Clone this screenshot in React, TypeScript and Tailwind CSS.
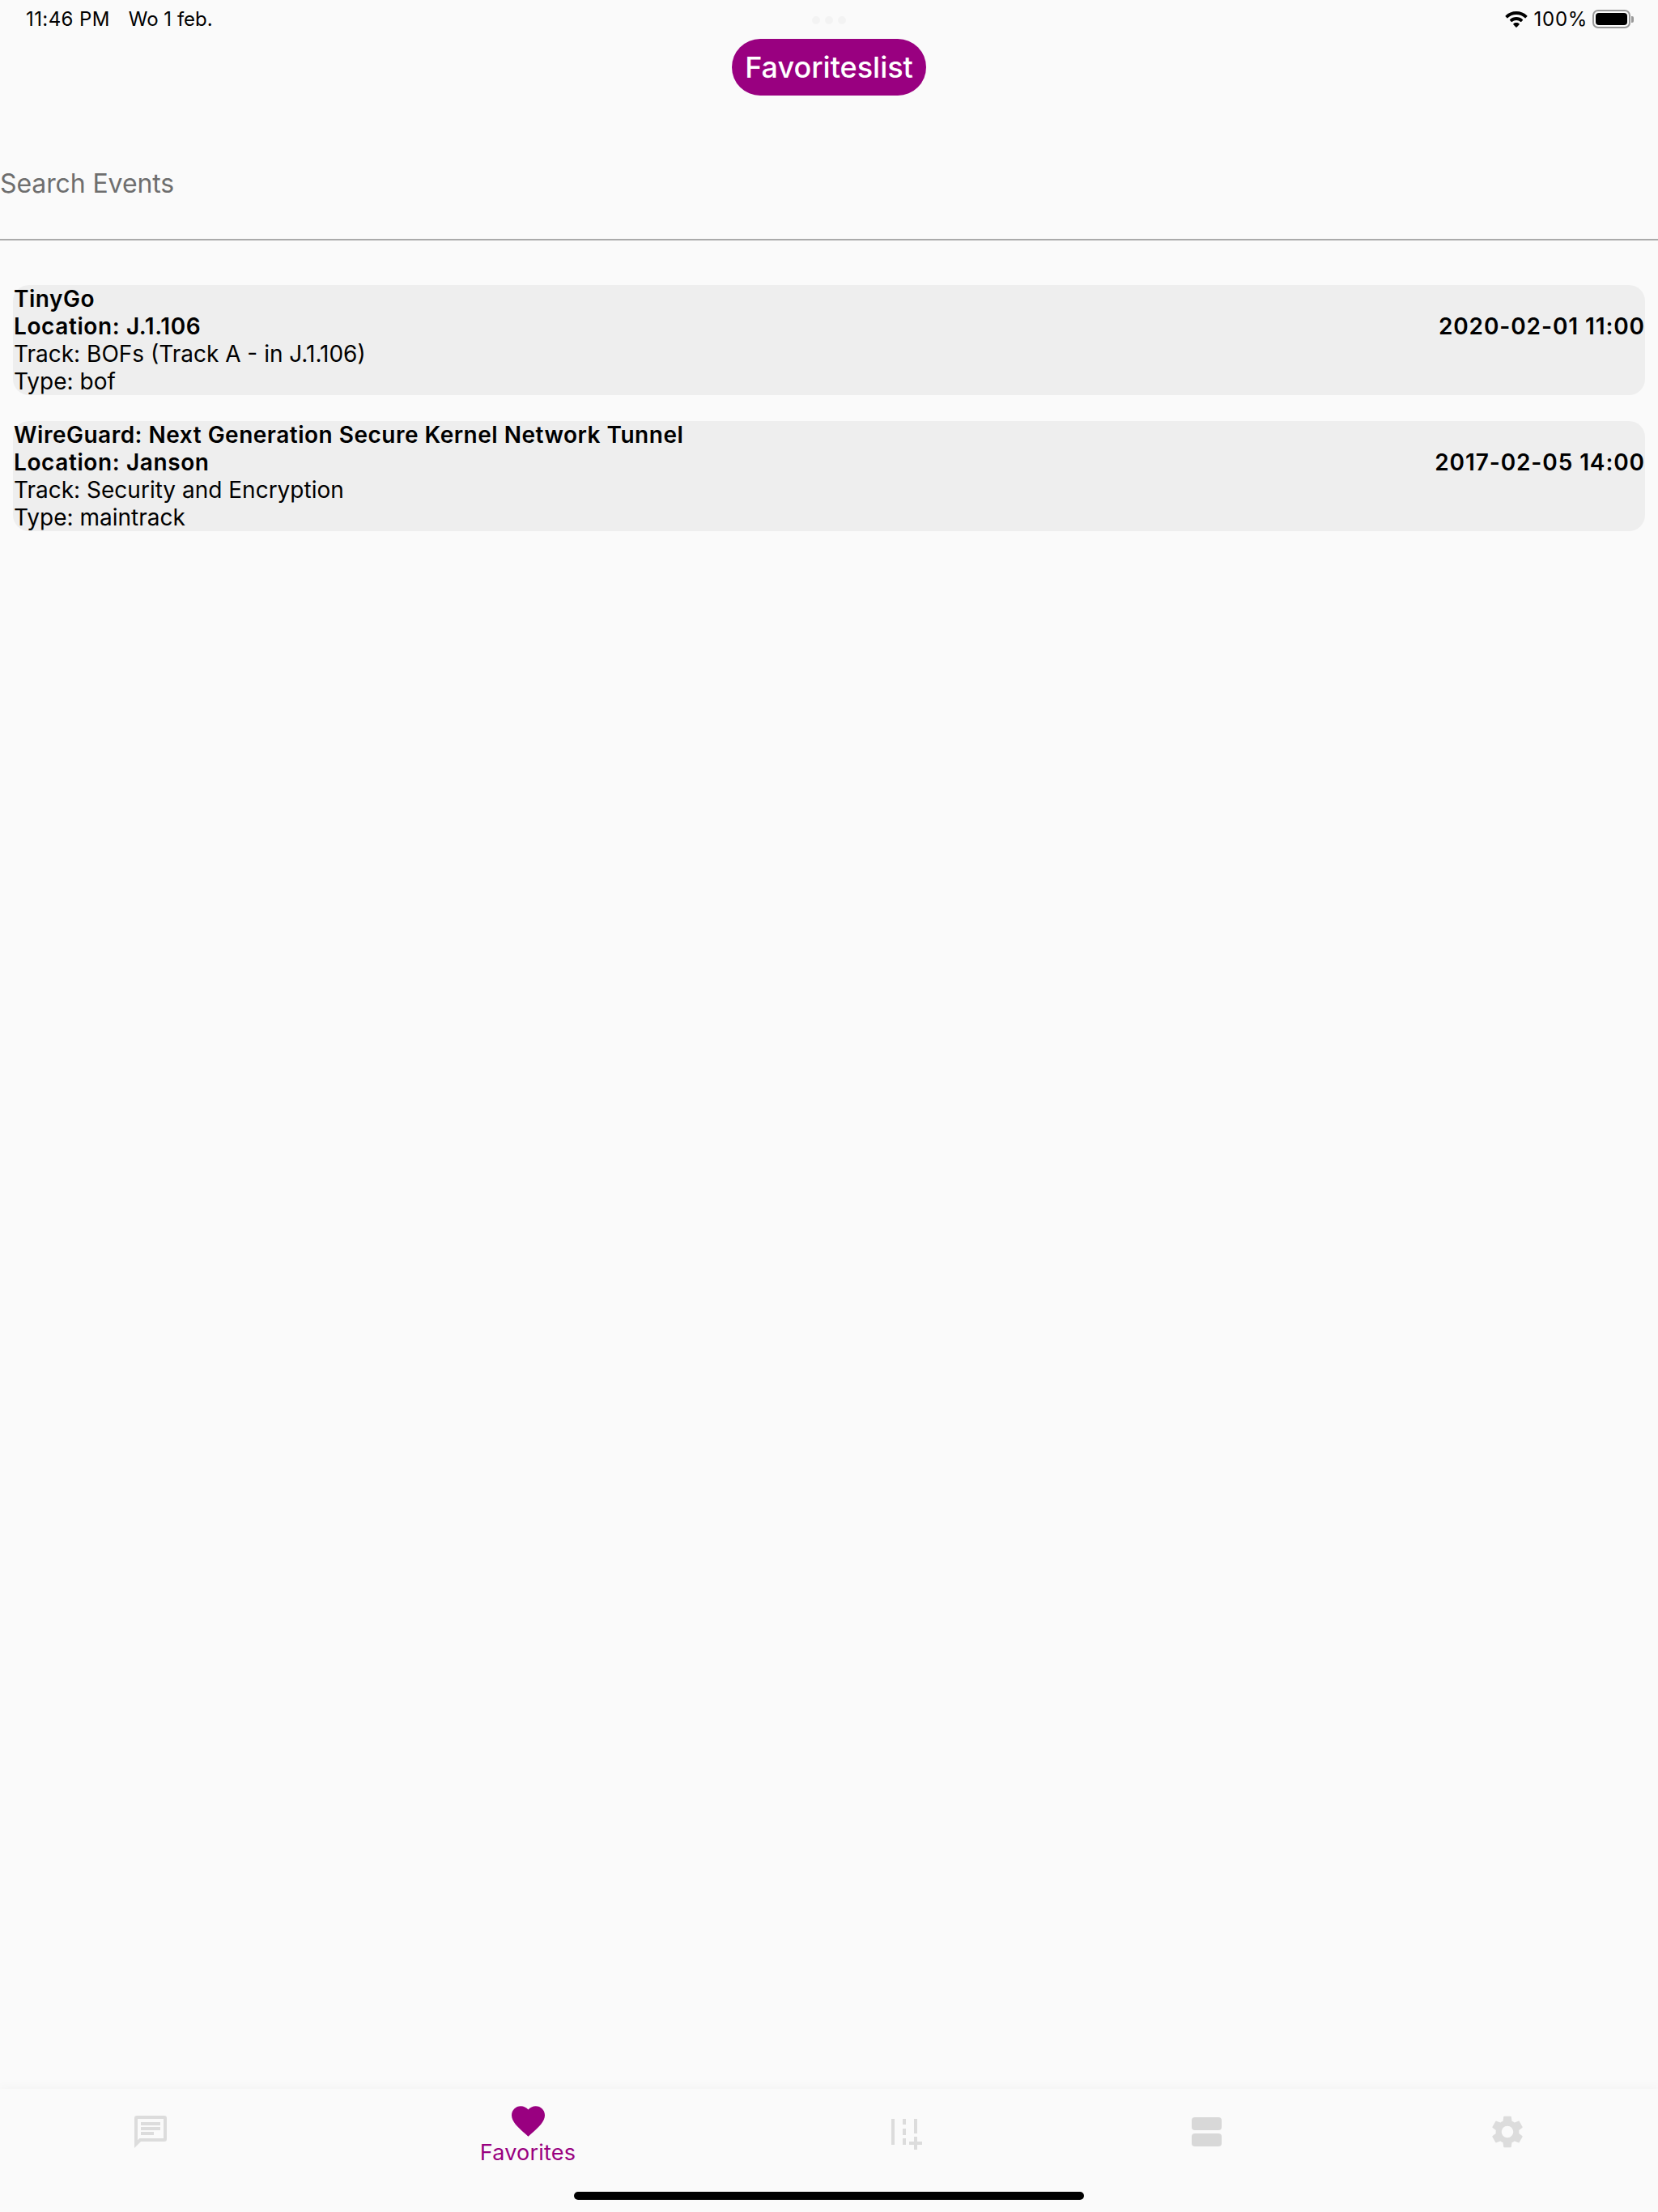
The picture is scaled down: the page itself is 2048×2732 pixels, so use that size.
const events = [
  {
    title: "TinyGo",
    location: "J.1.106",
    track: "BOFs (Track A - in J.1.106)",
    type: "bof",
    date: "2020-02-01 11:00",
  },
  {
    title: "WireGuard: Next Generation Secure Kernel Network Tunnel",
    location: "Janson",
    track: "Security and Encryption",
    type: "maintrack",
    date: "2017-02-05 14:00",
  },
];

function WifiIcon() {
  return (
    <svg width="28" height="20" viewBox="0 0 28 20" fill="currentColor">
      <path d="M14 0C8.800 0 4.100 2 .6 5.400c-.3.2-.3.6 0 .8l1.900 2c.2.3.6.3.8 0C6.100 5.600 9.900 4 14 4s7.900 1.600 10.700 4.200c.2.300.6.300.8 0l1.900-2c.3-.2.3-.6 0-.8C23.900 2 19.200 0 14 0z" />
      <path d="M14 7c-3.100 0-5.900 1.200-8 3.200-.2.200-.3.600 0 .8l1.900 2c.2.200.6.200.8 0C10.100 11.800 12 11 14 11s3.900.8 5.300 2c.2.200.6.200.8 0L22 11c.3-.2.2-.6 0-.8C19.900 8.200 17.100 7 14 7z" />
      <path d="M14 14c-1.400 0-2.700.5-3.700 1.400-.2.200-.3.600 0 .8l3.300 3.600c.2.200.6.200.8 0l3.300-3.600c.3-.2.2-.6 0-.8C16.700 14.500 15.400 14 14 14z" />
    </svg>
  );
}

function ChatIcon() {
  return (
    <svg width="40" height="40" viewBox="0 0 40 40" fill="#dcdcdc">
      <path
        fillRule="evenodd"
        d="M3 0h34a3 3 0 0 1 3 3v26a3 3 0 0 1-3 3H8l-8 8V3a3 3 0 0 1 3-3zM4 4v26.300L6.300 28H36V4z"
      />
      <path d="M8 8h24v4H8zM8 14h24v4H8zM8 20h16v4H8z" />
    </svg>
  );
}

function HeartIcon() {
  return (
    <svg width="41" height="38" viewBox="2 3 20 18.350" fill="#990080">
      <path d="M12 21.350l-1.450-1.320C5.400 15.360 2 12.280 2 8.500 2 5.420 4.420 3 7.500 3c1.740 0 3.410.81 4.500 2.090C13.090 3.810 14.760 3 16.500 3 19.580 3 22 5.420 22 8.500c0 3.780-3.400 6.860-8.550 11.540L12 21.350z" />
    </svg>
  );
}

function FilterAddIcon() {
  return (
    <svg width="38" height="38" viewBox="0 0 38 38" fill="#dcdcdc">
      <path d="M0 0h4v32H0zM14 0h4v7h-4zM14 12h4v8h-4zM14 24h4v8h-4zM28 0h4v18h-4z" />
      <path d="M28 22h4v6h6v4h-6v6h-4v-6h-6v-4h6z" />
    </svg>
  );
}

function StackIcon() {
  return (
    <div className="flex flex-col gap-[4px] w-[37px]">
      <div className="h-[16px] rounded-[4px] bg-[#d8d8d8]" />
      <div className="h-[16px] rounded-[4px] bg-[#d8d8d8]" />
    </div>
  );
}

function GearIcon() {
  return (
    <svg width="48" height="48" viewBox="0 0 24 24" fill="#dcdcdc">
      <path d="M19.140 12.940c.04-.3.06-.61.06-.94 0-.32-.02-.64-.07-.94l2.030-1.580c.18-.14.23-.41.12-.61l-1.920-3.320c-.12-.22-.37-.29-.59-.22l-2.390.96c-.5-.38-1.030-.7-1.620-.94L14.400 2.810c-.04-.24-.24-.41-.48-.41h-3.840c-.24 0-.43.17-.47.41L9.250 5.350c-.59.24-1.130.57-1.620.94l-2.390-.96c-.22-.08-.47 0-.59.22L2.740 8.870c-.12.21-.08.47.12.61l2.030 1.580c-.05.3-.09.63-.09.94s.02.64.07.94l-2.030 1.580c-.18.14-.23.41-.12.61l1.920 3.320c.12.22.37.29.59.22l2.390-.96c.5.38 1.030.7 1.620.94l.36 2.540c.05.24.24.41.48.41h3.840c.24 0 .44-.17.47-.41l.36-2.540c.59-.24 1.130-.56 1.620-.94l2.390.96c.22.08.47 0 .59-.22l1.920-3.320c.12-.22.07-.47-.12-.61l-2.010-1.580zM12 15.600c-1.980 0-3.600-1.620-3.600-3.600s1.620-3.600 3.600-3.600 3.600 1.620 3.600 3.600-1.620 3.600-3.600 3.600z" />
    </svg>
  );
}

export default function App() {
  return (
    <div className="relative flex flex-col h-[2732px] bg-[#fafafa] text-black font-['Inter',sans-serif]">
      {/* Status bar */}
      <div className="flex justify-between h-[48px] pl-[32px] pr-[30px] pt-[9px] text-[24px] leading-[30px]">
        <div className="flex gap-[23px]">
          <span className="tracking-[0.4px]">11:46 PM</span>
          <span>Wo 1 feb.</span>
        </div>
        <div className="flex items-start gap-[8px]">
          <div className="mt-[5px]">
            <WifiIcon />
          </div>
          <span className="tracking-[0.7px]">100%</span>
          <div className="flex items-center mt-[3px] -ml-[2px]">
            <div className="w-[47px] h-[23px] rounded-[7px] border-2 border-[#999999] p-[2px]">
              <div className="h-full rounded-[4px] bg-black" />
            </div>
            <div className="w-[3px] h-[8px] rounded-r-[2px] bg-[#999999] ml-[1px]" />
          </div>
        </div>
      </div>
      <div className="absolute top-[20px] left-[1003px] flex gap-[6px]">
        <div className="w-[10px] h-[10px] rounded-full bg-[#f3f3f3]" />
        <div className="w-[10px] h-[10px] rounded-full bg-[#f3f3f3]" />
        <div className="w-[10px] h-[10px] rounded-full bg-[#f3f3f3]" />
      </div>

      {/* Title */}
      <div className="flex justify-center">
        <div className="flex items-center justify-center w-[240px] h-[70px] rounded-[35px] bg-[#990080] text-white text-[36px] font-medium">
          Favoriteslist
        </div>
      </div>

      {/* Search */}
      <div className="flex items-center h-[179px] pt-[40px] border-b-2 border-[#aaaaaa] text-[32px] tracking-[-0.1px] text-[#6e6e6e]">
        Search Events
      </div>

      {/* Event list */}
      <div className="flex flex-col gap-[32px] mt-[55px] mx-[16px] text-[28px] leading-[34px]">
        {events.map((e) => (
          <div key={e.date} className="flex justify-between h-[136px] rounded-[20px] bg-[#eeeeee] pl-[1px]">
            <div>
              <p className="font-semibold tracking-[0.5px]">{e.title}</p>
              <p className="font-semibold tracking-[0.6px]">Location: {e.location}</p>
              <p>Track: {e.track}</p>
              <p>Type: {e.type}</p>
            </div>
            <p className="pt-[34px] font-semibold tracking-[0.9px]">{e.date}</p>
          </div>
        ))}
      </div>

      {/* Tab bar */}
      <div className="mt-auto grid grid-cols-[372px_560px_372px_372px_372px] h-[152px] pt-[21px] shadow-[0_-4px_10px_rgba(0,0,0,0.025)]">
        <div className="flex justify-center pt-[12px]">
          <ChatIcon />
        </div>
        <div className="flex flex-col items-center">
          <HeartIcon />
          <span className="mt-[3px] text-[27px] leading-[34px] tracking-[0.2px] text-[#990080]">Favorites</span>
        </div>
        <div className="flex justify-center pt-[16px] pl-[4px]">
          <FilterAddIcon />
        </div>
        <div className="flex justify-center pt-[14px]">
          <StackIcon />
        </div>
        <div className="flex justify-center pt-[8px]">
          <GearIcon />
        </div>
      </div>

      {/* Home indicator */}
      <div className="absolute left-[709px] bottom-[15px] w-[630px] h-[10px] rounded-full bg-black" />
    </div>
  );
}
